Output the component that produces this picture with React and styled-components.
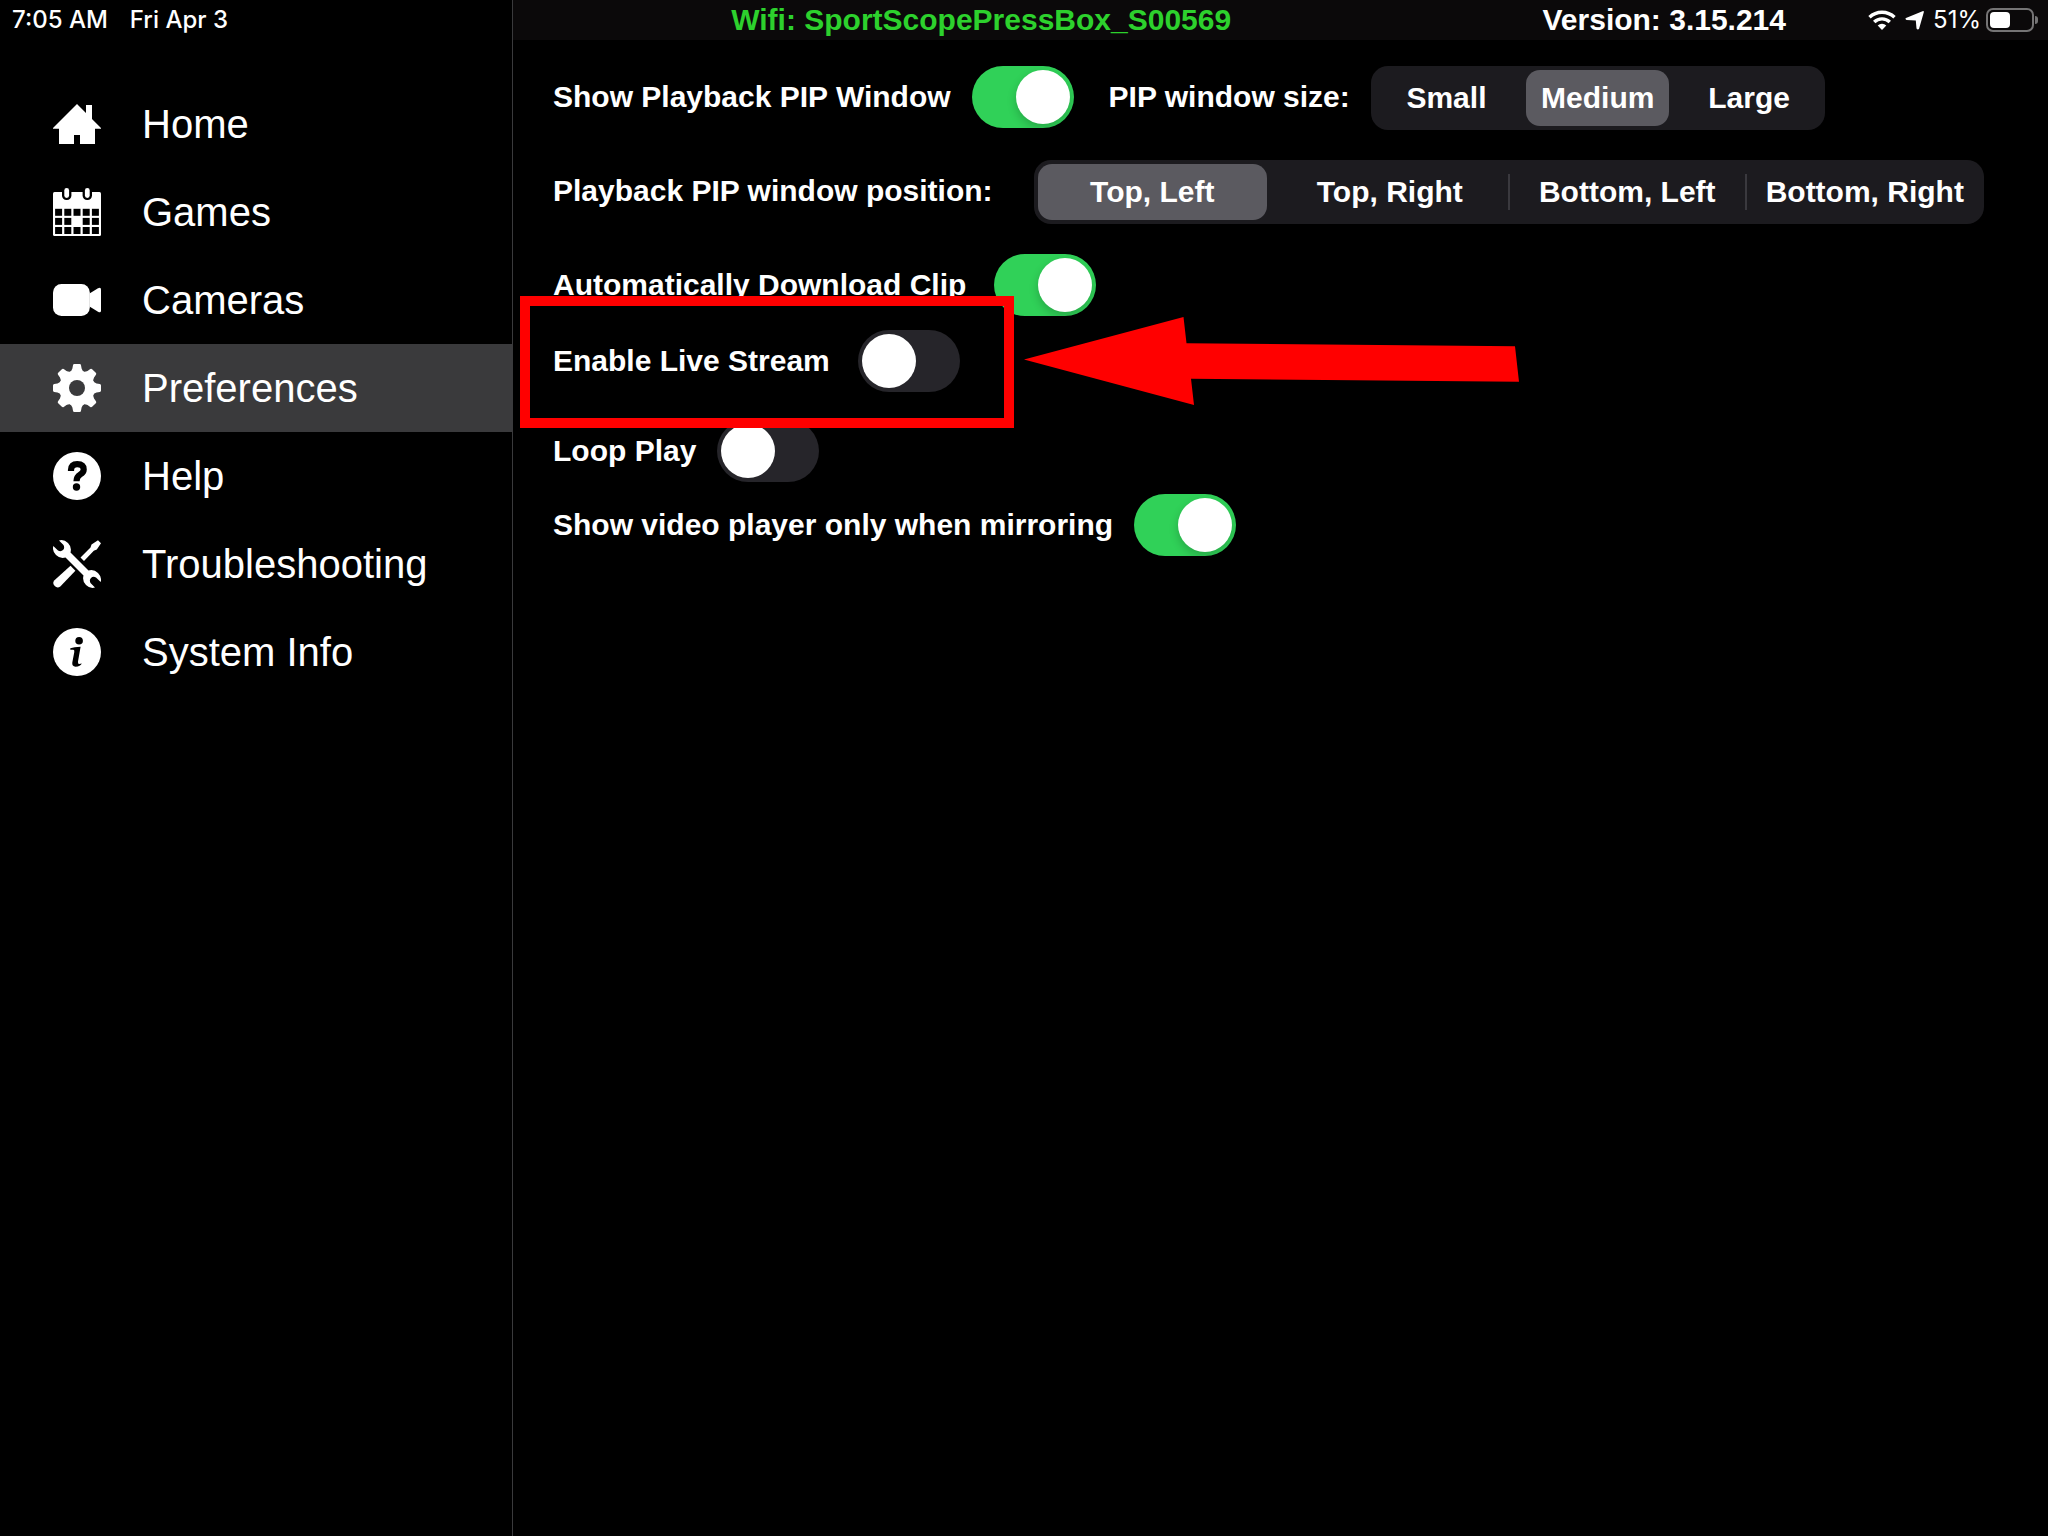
import { useState } from "react";
import styled, { createGlobalStyle } from "styled-components";

const HomeIcon = () => (
	<svg viewBox="0 0 48 48" fill="currentColor" aria-hidden="true">
		<path d="M24 4 33 13V5h6v14l9 9v.7h-6V44H27v-9h-6v9H6V28.7H0V28Z" />
	</svg>
);

const cells = [0, 1, 2].flatMap((row) =>
	[0, 1, 2, 3, 4]
		.filter((col) => !(row === 1 && col === 2))
		.map((col) => ({ x: 2.1 + col * 9.2, y: 20.8 + row * 9.1 }))
);

const CalendarIcon = () => (
	<svg viewBox="0 0 48 48" fill="currentColor" aria-hidden="true">
		<mask id="calendar-cut">
			<rect width="48" height="48" fill="#fff" />
			<rect x="9" y="-4" width="9.4" height="16" rx="4.5" fill="#000" />
			<rect x="29.6" y="-4" width="9.4" height="16" rx="4.5" fill="#000" />
			{cells.map(({ x, y }) => (
				<rect key={`${x}-${y}`} x={x} y={y} width="7" height="7" fill="#000" />
			))}
		</mask>
		<rect y="4" width="48" height="44" rx="1.5" mask="url(#calendar-cut)" />
		<rect x="11.3" width="4.8" height="10" rx="2.4" />
		<rect x="31.9" width="4.8" height="10" rx="2.4" />
	</svg>
);

const CameraIcon = () => (
	<svg viewBox="0 0 48 48" fill="currentColor" aria-hidden="true">
		<rect y="8" width="36.8" height="32" rx="8.5" />
		<path d="M36.5 17.5 45 12.2Q48 10.6 48 13.5V34.5Q48 37.4 45 35.8L36.5 30.5Z" />
	</svg>
);

const GearIcon = () => (
	<svg viewBox="0 0 48 48" fill="currentColor" aria-hidden="true">
		<mask id="gear-cut">
			<rect width="48" height="48" fill="#fff" />
			<circle cx="24" cy="24" r="8" fill="#000" />
		</mask>
		<g mask="url(#gear-cut)">
			<circle cx="24" cy="24" r="17.5" />
			{[0, 45, 90, 135, 180, 225, 270, 315].map((angle) => (
				<path
					key={angle}
					transform={`rotate(${angle} 24 24)`}
					d="M20 1.2Q20.1 0 21.4 0h5.2Q27.9 0 28 1.2L28.6 4.5Q29.3 6.9 31.5 8.3L24 12 16.5 8.3Q18.7 6.9 19.4 4.5Z"
				/>
			))}
		</g>
	</svg>
);

const HelpIcon = () => (
	<svg viewBox="0 0 48 48" fill="currentColor" aria-hidden="true">
		<mask id="help-cut">
			<rect width="48" height="48" fill="#fff" />
			<path
				d="M18 19v-1Q18.300 12.200 24.200 12.200 30.700 12.300 30.700 17.500 30.700 20.300 27.200 22.500 23.500 24.800 23.500 29.200"
				fill="none"
				stroke="#000"
				strokeWidth="6.2"
			/>
			<circle cx="23.5" cy="35" r="3.7" fill="#000" />
		</mask>
		<circle cx="24" cy="24" r="24" mask="url(#help-cut)" />
	</svg>
);

const ToolsIcon = () => (
	<svg viewBox="0 0 48 48" fill="currentColor" aria-hidden="true">
		<path d="M.3 6 5 10.5Q8 12 10 10 12 8 10.5 5L6 .4Q11-1 15 3 19 7 17.5 12.5L35.5 30.5Q41 29 45 33 49 37 47.7 42L43 37.5Q40 36 38 38 36 40 37.5 43L42 47.6Q37 49 33 45 29 41 30.5 35.5L12.5 17.5Q7 19 3 15-1 11 .3 6Z" />
		<path d="M27.5 17.5 37.5 7.5 38.5 4.5 45 .3 48 3.2 43.8 9.5 40.8 10.8 31 21Z" />
		<path d="M17.5 25.8 22.4 30.7 7.3 46.4A4.3 4.3 0 0 1 1.200 40.500Z" />
	</svg>
);

const InfoIcon = () => (
	<svg viewBox="0 0 48 48" fill="currentColor" aria-hidden="true">
		<mask id="info-cut">
			<rect width="48" height="48" fill="#fff" />
			<circle cx="26.1" cy="12.7" r="3.8" fill="#000" />
			<path d="M17.3 20.2Q21 19 27.6 18.8L25 33.500Q24.600 36 26.300 36L28.800 35.600Q27.500 38.700 22.500 38.700 18.800 38.500 19.300 34.500L21.300 24Q21.600 21.900 20.300 21.800H17.300Z" fill="#000" />
		</mask>
		<circle cx="24" cy="24" r="24" mask="url(#info-cut)" />
	</svg>
);

const WifiIcon = () => (
	<svg width="28" height="20" viewBox="0 0 28 20" aria-hidden="true">
		<g fill="none" stroke="#fff" strokeWidth="3.4">
			<path d="M1.5 7.3a18 18 0 0 1 25 0" />
			<path d="M6.2 12a11.2 11.2 0 0 1 15.6 0" />
		</g>
		<path d="M9.7 15.5a6.2 6.2 0 0 1 8.6 0L14 20Z" fill="#fff" />
	</svg>
);

const LocationIcon = () => (
	<svg width="19" height="19" viewBox="0 0 19 19" fill="#fff" aria-hidden="true">
		<path d="M1 7 17.5.2Q19.2-.2 18.8 1.2L14 18Q12.5 19 11.5 17.5L10.8 9.6 1.5 9Q-.4 8 1 7Z" />
	</svg>
);

const navItems = [
	{ name: "Home", Icon: HomeIcon },
	{ name: "Games", Icon: CalendarIcon },
	{ name: "Cameras", Icon: CameraIcon },
	{ name: "Preferences", Icon: GearIcon },
	{ name: "Help", Icon: HelpIcon },
	{ name: "Troubleshooting", Icon: ToolsIcon },
	{ name: "System Info", Icon: InfoIcon },
];

const Toggle = ({ label, on = false, gap = 21 }) => {
	const [checked, setChecked] = useState(on);

	return (
		<ToggleLabel $gap={gap}>
			{label}
			<Switch
				type="checkbox"
				role="switch"
				checked={checked}
				onChange={() => setChecked((prev) => !prev)}
			/>
		</ToggleLabel>
	);
};

const Segmented = ({ label, name, options, initial, gap, width }) => {
	const [value, setValue] = useState(initial);
	const selected = options.indexOf(value);

	return (
		<Setting role="radiogroup" aria-labelledby={`${name}-label`} $gap={gap}>
			<SettingLabel id={`${name}-label`}>{label}</SettingLabel>
			<Segments $width={width}>
				{options.map((option, i) => (
					<Segment
						key={option}
						$selected={i === selected}
						$divided={i > 0 && i !== selected && i !== selected + 1}
					>
						<HiddenRadio
							type="radio"
							name={name}
							checked={i === selected}
							onChange={() => setValue(option)}
						/>
						{option}
					</Segment>
				))}
			</Segments>
		</Setting>
	);
};

const App = () => (
	<>
		<GlobalStyle />
		<Page>
			<Sidebar>
				<Clock>
					<span>7:05 AM</span>
					<span>Fri Apr 3</span>
				</Clock>
				<Nav>
					{navItems.map(({ name, Icon }) => (
						<NavLink
							key={name}
							href="#"
							$active={name === "Preferences"}
							aria-current={name === "Preferences" ? "page" : undefined}
						>
							<Icon />
							{name}
						</NavLink>
					))}
				</Nav>
			</Sidebar>
			<Main>
				<StatusBar>
					<Network>Wifi: SportScopePressBox_S00569</Network>
					<Version>Version: 3.15.214</Version>
					<Device>
						<WifiIcon />
						<LocationIcon />
						<Charge>
							51%
							<Battery>
								<BatteryLevel />
							</Battery>
						</Charge>
					</Device>
				</StatusBar>
				<Settings>
					<Row $after={30}>
						<Toggle label="Show Playback PIP Window" on />
						<Segmented
							label="PIP window size:"
							name="pip-size"
							options={["Small", "Medium", "Large"]}
							initial="Medium"
							gap={21}
							width={454}
						/>
					</Row>
					<Row $after={30}>
						<Segmented
							label="Playback PIP window position:"
							name="pip-position"
							options={["Top, Left", "Top, Right", "Bottom, Left", "Bottom, Right"]}
							initial="Top, Left"
							gap={41}
							width={950}
						/>
					</Row>
					<Row $after={14}>
						<Toggle label="Automatically Download Clip" on gap={28} />
					</Row>
					<Row $after={28}>
						<Toggle label="Enable Live Stream" gap={28} />
						<Highlight />
						<Arrow viewBox="0 0 496 88" aria-hidden="true">
							<path d="M0 42.5 159.5 0 162.5 26.3 491 29.3 495 64.7 167 61.7 170 88Z" />
						</Arrow>
					</Row>
					<Row $after={12}>
						<Toggle label="Loop Play" />
					</Row>
					<Row $after={0}>
						<Toggle label="Show video player only when mirroring" on />
					</Row>
				</Settings>
			</Main>
		</Page>
	</>
);

const GlobalStyle = createGlobalStyle`
	* {
		box-sizing: border-box;
	}

	body {
		margin: 0;
		background: #000;
		color: #fff;
		font-family: "Liberation Sans", Arial, sans-serif;
	}
`;

const Page = styled.div`
	display: grid;
	grid-template-columns: 25% 1fr;
	min-height: 100vh;
`;

const Sidebar = styled.aside`
	display: flex;
	flex-direction: column;
	gap: 40px;
`;

const Clock = styled.div`
	display: flex;
	gap: 22px;
	height: 40px;
	padding-left: 12px;
	font-family: Inter, sans-serif;
	font-size: 24px;
	font-weight: 500;
	line-height: 40px;
`;

const Nav = styled.nav`
	display: flex;
	flex-direction: column;
`;

const NavLink = styled.a`
	display: flex;
	align-items: center;
	gap: 41px;
	height: 88px;
	padding-left: 53px;
	background: ${(props) => (props.$active ? "#3a3a3c" : "none")};
	color: #fff;
	font-size: 40px;
	text-decoration: none;

	svg {
		width: 48px;
		height: 48px;
	}
`;

const Main = styled.main`
	border-left: 1px solid #3a3a3c;
`;

const StatusBar = styled.header`
	display: grid;
	grid-template-columns: 61% 28% minmax(0, 1fr);
	height: 40px;
	background: #0b090a;
	font-size: 30px;
	font-weight: 700;
	line-height: 40px;
	text-align: center;
`;

const Network = styled.div`
	color: #2dd12d;
`;

const Version = styled.div`
	color: #fff;
`;

const Device = styled.div`
	display: flex;
	align-items: center;
	justify-content: flex-end;
	gap: 9px;
	padding-right: 14px;

	svg {
		flex: none;
	}
`;

const Charge = styled.div`
	display: flex;
	align-items: center;
	gap: 5px;
	font-family: Inter, sans-serif;
	font-size: 24px;
	font-weight: 400;
`;

const Battery = styled.div`
	position: relative;
	flex: none;
	width: 48px;
	height: 24px;
	padding: 2px;
	border: 2px solid #757475;
	border-radius: 7px;

	&::after {
		content: "";
		position: absolute;
		top: 6px;
		right: -6px;
		width: 3px;
		height: 8px;
		border-radius: 0 3px 3px 0;
		background: #757475;
	}
`;

const BatteryLevel = styled.div`
	width: 51%;
	height: 100%;
	border-radius: 4px;
	background: #fff;
`;

const Settings = styled.div`
	padding: 26px 40px;
	font-size: 30px;
	font-weight: 700;
`;

const Row = styled.div`
	position: relative;
	display: flex;
	align-items: flex-start;
	gap: 35px;
	margin-bottom: ${(props) => props.$after}px;
`;

const Setting = styled.div`
	display: flex;
	gap: ${(props) => props.$gap}px;
`;

const SettingLabel = styled.span`
	line-height: 62px;
`;

const ToggleLabel = styled.label`
	display: flex;
	gap: ${(props) => props.$gap}px;
	line-height: 62px;
	cursor: pointer;
`;

const Switch = styled.input`
	appearance: none;
	flex: none;
	width: 102px;
	height: 62px;
	margin: 0;
	padding: 4px;
	border-radius: 31px;
	background: #26252a;
	cursor: pointer;

	&::before {
		content: "";
		display: block;
		width: 54px;
		height: 54px;
		border-radius: 100%;
		background: #fff;
	}

	&:checked {
		background: #30d158;
	}

	&:checked::before {
		margin-left: 40px;
		box-shadow: 0 4px 10px rgba(0, 0, 0, 0.2);
	}
`;

const Segments = styled.div`
	display: grid;
	grid-auto-columns: 1fr;
	grid-auto-flow: column;
	width: ${(props) => props.$width}px;
	height: 64px;
	border-radius: 17px;
	background: #1c1b1f;
`;

const Segment = styled.label`
	position: relative;
	margin: 4px;
	border-radius: 14px;
	background: ${(props) => (props.$selected ? "#5b5a60" : "none")};
	line-height: 56px;
	text-align: center;
	white-space: nowrap;
	cursor: pointer;

	&::before {
		content: "";
		display: ${(props) => (props.$divided ? "block" : "none")};
		position: absolute;
		top: 10px;
		left: -5px;
		width: 2px;
		height: 36px;
		background: #3a393e;
	}
`;

const HiddenRadio = styled.input`
	position: absolute;
	inset: 0;
	margin: 0;
	opacity: 0;
	cursor: pointer;
`;

const Highlight = styled.div`
	position: absolute;
	z-index: 1;
	top: -34px;
	left: -33px;
	width: 494px;
	height: 132px;
	border: 10px solid #f00;
	pointer-events: none;
`;

const Arrow = styled.svg`
	position: absolute;
	z-index: 1;
	top: -13px;
	left: 471px;
	width: 496px;
	height: 88px;
	fill: #f00;
	pointer-events: none;
`;

export default App;
